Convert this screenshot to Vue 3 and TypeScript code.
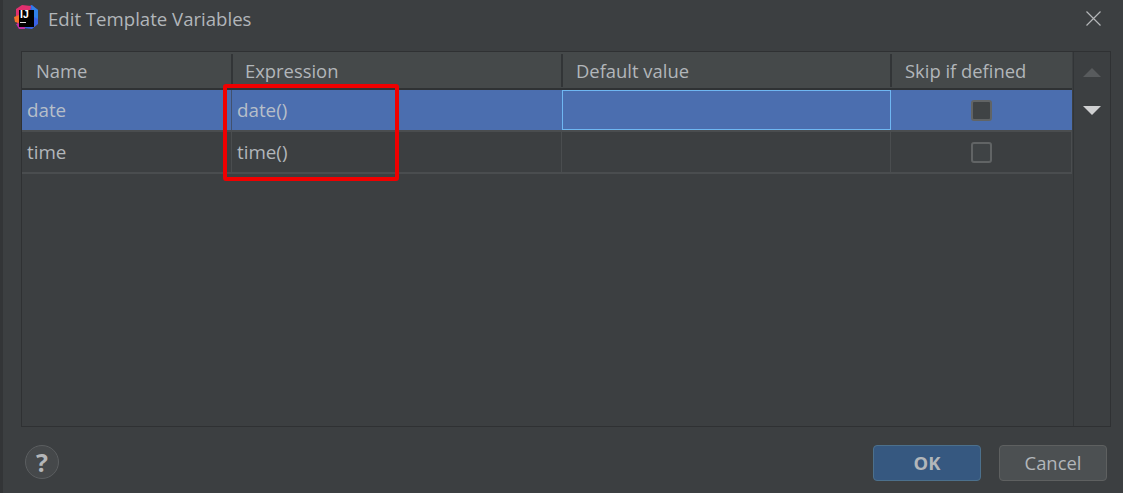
<template>
  <div class="dialog">
    <header class="title-bar">
      <svg class="logo" width="25" height="25" viewBox="0 0 25 25">
        <path d="M13 2 L18 0 L24 5 L24 19 L18 24 L9 23 Z" fill="#3a62e6" />
        <path d="M17 0 L24 5 L24 14 L20 12 Z" fill="#2f82ea" />
        <path d="M2 4 L8 0 L17 1 L16 6 L5 23 L2 14 Z" fill="#e2306f" />
        <path d="M0 12 L5 10 L5 18 L1 17 Z" fill="#f4702a" />
        <path d="M2 19 L10 17 L11 24 L5 24 Z" fill="#c32da3" />
        <rect x="5" y="5" width="15" height="17" fill="#000" />
        <text x="6" y="13.4" class="logo-text">IJ</text>
        <rect x="6" y="17" width="6" height="1" fill="#ddd" />
      </svg>
      <span class="title">Edit Template Variables</span>
      <svg class="close" width="15" height="15" viewBox="0 0 15 15">
        <path d="M0.5 0.5 L14.5 14.5 M14.5 0.5 L0.5 14.5" stroke="#b4b6b8" stroke-width="1.2" fill="none" />
      </svg>
    </header>

    <div class="panel">
      <div class="table-area">
        <div class="table">
          <div class="head">
            <div v-for="col in columns" :key="col" class="head-cell">{{ col }}</div>
          </div>
          <div
            v-for="(item, i) in variables"
            :key="item.name"
            class="body-row"
            :class="{ selected: i === 0 }"
          >
            <div class="cell">{{ item.name }}</div>
            <div class="cell">{{ item.expression }}</div>
            <div class="cell" :class="{ editing: i === 0 }">{{ item.defaultValue }}</div>
            <div class="cell check-cell"><span class="checkbox"></span></div>
          </div>
        </div>
        <div class="side">
          <span class="arrow up"></span>
          <span class="arrow down"></span>
        </div>
      </div>
      <div class="highlight"></div>
    </div>

    <footer class="footer">
      <button type="button" class="help">?</button>
      <div class="buttons">
        <button type="button" class="btn btn-ok">OK</button>
        <button type="button" class="btn">Cancel</button>
      </div>
    </footer>
  </div>
</template>

<script setup lang="ts">
const columns = ['Name', 'Expression', 'Default value', 'Skip if defined']

const variables = [
  { name: 'date', expression: 'date()', defaultValue: '' },
  { name: 'time', expression: 'time()', defaultValue: '' }
]
</script>

<style>
html,
body {
  margin: 0;
  background: #3c3f41;
}
</style>

<style scoped>
.dialog {
  width: 1123px;
  height: 493px;
  box-sizing: border-box;
  background: #3c3f41;
  border-left: 3px solid #333537;
  display: flex;
  flex-direction: column;
  font-family: "Open Sans", "Noto Sans", sans-serif;
  font-size: 18.4px;
  color: #b2b6ba;
  overflow: hidden;
}

.title-bar {
  height: 51px;
  flex: none;
  display: flex;
  align-items: flex-start;
  padding: 5px 22px 0 11px;
  box-sizing: border-box;
}

.logo {
  flex: none;
  margin-right: 9px;
}

.logo-text {
  font-family: "Liberation Sans", sans-serif;
  font-size: 10.5px;
  font-weight: 700;
  fill: #fff;
}

.title {
  flex: 1;
  line-height: 28px;
  font-size: 18.6px;
}

.close {
  margin-top: 6px;
}

.panel {
  position: relative;
  margin: 0 12px 0 18px;
  height: 376px;
  flex: none;
}

.table-area {
  height: 100%;
  box-sizing: border-box;
  border: 1px solid #2f3133;
  display: flex;
}

.table {
  width: 1050px;
  flex: none;
}

.head {
  display: grid;
  grid-template-columns: 211px 330px 329px 180px;
  height: 38px;
  box-sizing: border-box;
  background: #45494a;
  border-bottom: 2px solid #2f3234;
  padding-top: 2px;
}

.head-cell {
  height: 33px;
  line-height: 34px;
  padding-left: 13px;
  border-right: 2px solid #323537;
  box-sizing: border-box;
}

.head-cell:first-child {
  padding-left: 14px;
}

.head-cell:nth-child(2) {
  padding-left: 12px;
}

.head-cell:last-child {
  border-right: none;
}

.body-row {
  display: grid;
  grid-template-columns: 210px 330px 329px 181px;
  height: 42px;
  border-bottom: 2px solid #4a4d4f;
  box-sizing: border-box;
}

.selected {
  background: #4b6eaf;
}

.cell {
  padding-left: 5px;
  font-size: 18.8px;
  line-height: 40px;
  box-sizing: border-box;
  border-right: 1px solid #4a4d4f;
  height: 40px;
}

.selected .cell {
  border-right-color: #4b6eaf;
  color: #b7bfc9;
}

.selected .cell:first-child {
  border-right-color: #41516e;
}

.cell.editing,
.selected .cell.editing {
  border: 1px solid #6fb7f2;
}

.check-cell {
  display: flex;
  align-items: center;
  justify-content: center;
  padding-left: 1px;
}

.checkbox {
  width: 21px;
  height: 21px;
  box-sizing: border-box;
  border: 2px solid #616465;
  border-radius: 3px;
  background: #3f4345;
}

.side {
  flex: 1;
  border-left: 1px solid #323537;
  margin-left: 1px;
  display: flex;
  flex-direction: column;
  align-items: center;
  padding-top: 16px;
  gap: 29px;
}

.arrow {
  width: 0;
  height: 0;
  border-left: 9px solid transparent;
  border-right: 9px solid transparent;
}

.arrow.up {
  border-bottom: 9px solid #585b5d;
}

.arrow.down {
  border-top: 9px solid #cfd0d1;
}

.highlight {
  position: absolute;
  left: 202px;
  top: 33px;
  width: 176px;
  height: 97px;
  box-sizing: border-box;
  border: 4px solid #f00000;
  border-radius: 3px;
  pointer-events: none;
}

.footer {
  flex: 1;
  display: flex;
  align-items: flex-start;
  justify-content: space-between;
  padding: 18px 16px 0 22px;
}

.help {
  width: 34px;
  height: 34px;
  border-radius: 50%;
  border: 1px solid #5b5e60;
  background: #45484a;
  color: #b4b6b8;
  font-family: "Open Sans", sans-serif;
  font-size: 25px;
  font-weight: 700;
  line-height: 30px;
  padding: 0;
}

.buttons {
  display: flex;
  gap: 18px;
}

.btn {
  width: 108px;
  height: 36px;
  box-sizing: border-box;
  border: 1px solid #5e6060;
  border-radius: 4px;
  background: #4c5052;
  color: #b2b6ba;
  font-family: inherit;
  font-size: 18.4px;
  padding: 0 0 2px;
}

.btn-ok {
  background: #365880;
  border-color: #4c708c;
  font-weight: 700;
}
</style>
